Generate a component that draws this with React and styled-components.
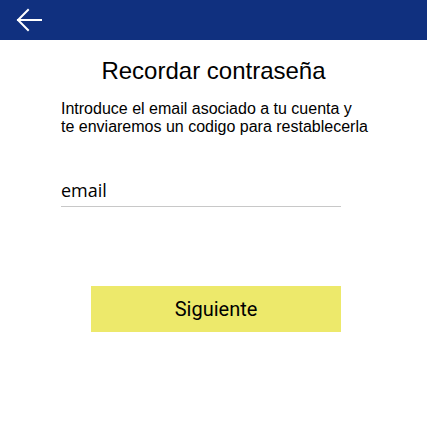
import React from "react";
import styled, { createGlobalStyle } from "styled-components";

const Global = createGlobalStyle`
  html, body { margin: 0; padding: 0; background: #ffffff; }
  body { font-family: "Liberation Sans", Arial, sans-serif; }
`;

const Page = styled.div`
  width: 427px;
  min-height: 442px;
  background: #fff;
`;

const TopBar = styled.header`
  height: 40px;
  background: #10307f;
  display: flex;
  align-items: center;
  padding-left: 15px;
`;

const BackButton = styled.button`
  width: 28px;
  height: 28px;
  padding: 0;
  border: none;
  background: transparent;
  display: flex;
  align-items: center;
  justify-content: center;
  cursor: pointer;
`;

const Content = styled.main`
  display: flex;
  flex-direction: column;
  align-items: center;
`;

const Title = styled.h1`
  margin: 17px 0 0;
  font-family: "Liberation Sans", Arial, sans-serif;
  font-weight: 400;
  font-size: 24px;
  color: #000;
  text-align: center;
`;

const Column = styled.div`
  align-self: flex-start;
  margin-left: 61px;
  width: 280px;
  display: flex;
  flex-direction: column;
`;

const Intro = styled.p`
  margin: 15px 0 0;
  font-size: 16px;
  line-height: 18px;
  color: #000;
  white-space: nowrap;
`;

const Field = styled.div`
  margin-top: 42px;
  padding-bottom: 4px;
  border-bottom: 1px solid #c8c8c8;
  font-family: "Open Sans", sans-serif;
  font-size: 18px;
  color: #000;
`;

const NextButton = styled.button`
  margin-top: 79px;
  margin-left: 30px;
  width: 250px;
  height: 46px;
  padding: 0;
  border: none;
  background: #ede96b;
  font-family: Roboto, sans-serif;
  font-size: 20px;
  color: #000;
  cursor: pointer;
`;

const ArrowIcon = () => (
  <svg width="28" height="28" viewBox="0 0 28 28" fill="none" stroke="#fff" strokeWidth="2" strokeLinecap="square">
    <line x1="3" y1="14" x2="26" y2="14" />
    <polyline points="13,4 3,14 13,24" />
  </svg>
);

export default function App() {
  return (
    <Page>
      <Global />
      <TopBar>
        <BackButton aria-label="Volver">
          <ArrowIcon />
        </BackButton>
      </TopBar>
      <Content>
        <Title>Recordar contraseña</Title>
        <Column>
          <Intro>
            Introduce el email asociado a tu cuenta y
            <br />
            te enviaremos un codigo para restablecerla
          </Intro>
          <Field>email</Field>
          <NextButton>Siguiente</NextButton>
        </Column>
      </Content>
    </Page>
  );
}
